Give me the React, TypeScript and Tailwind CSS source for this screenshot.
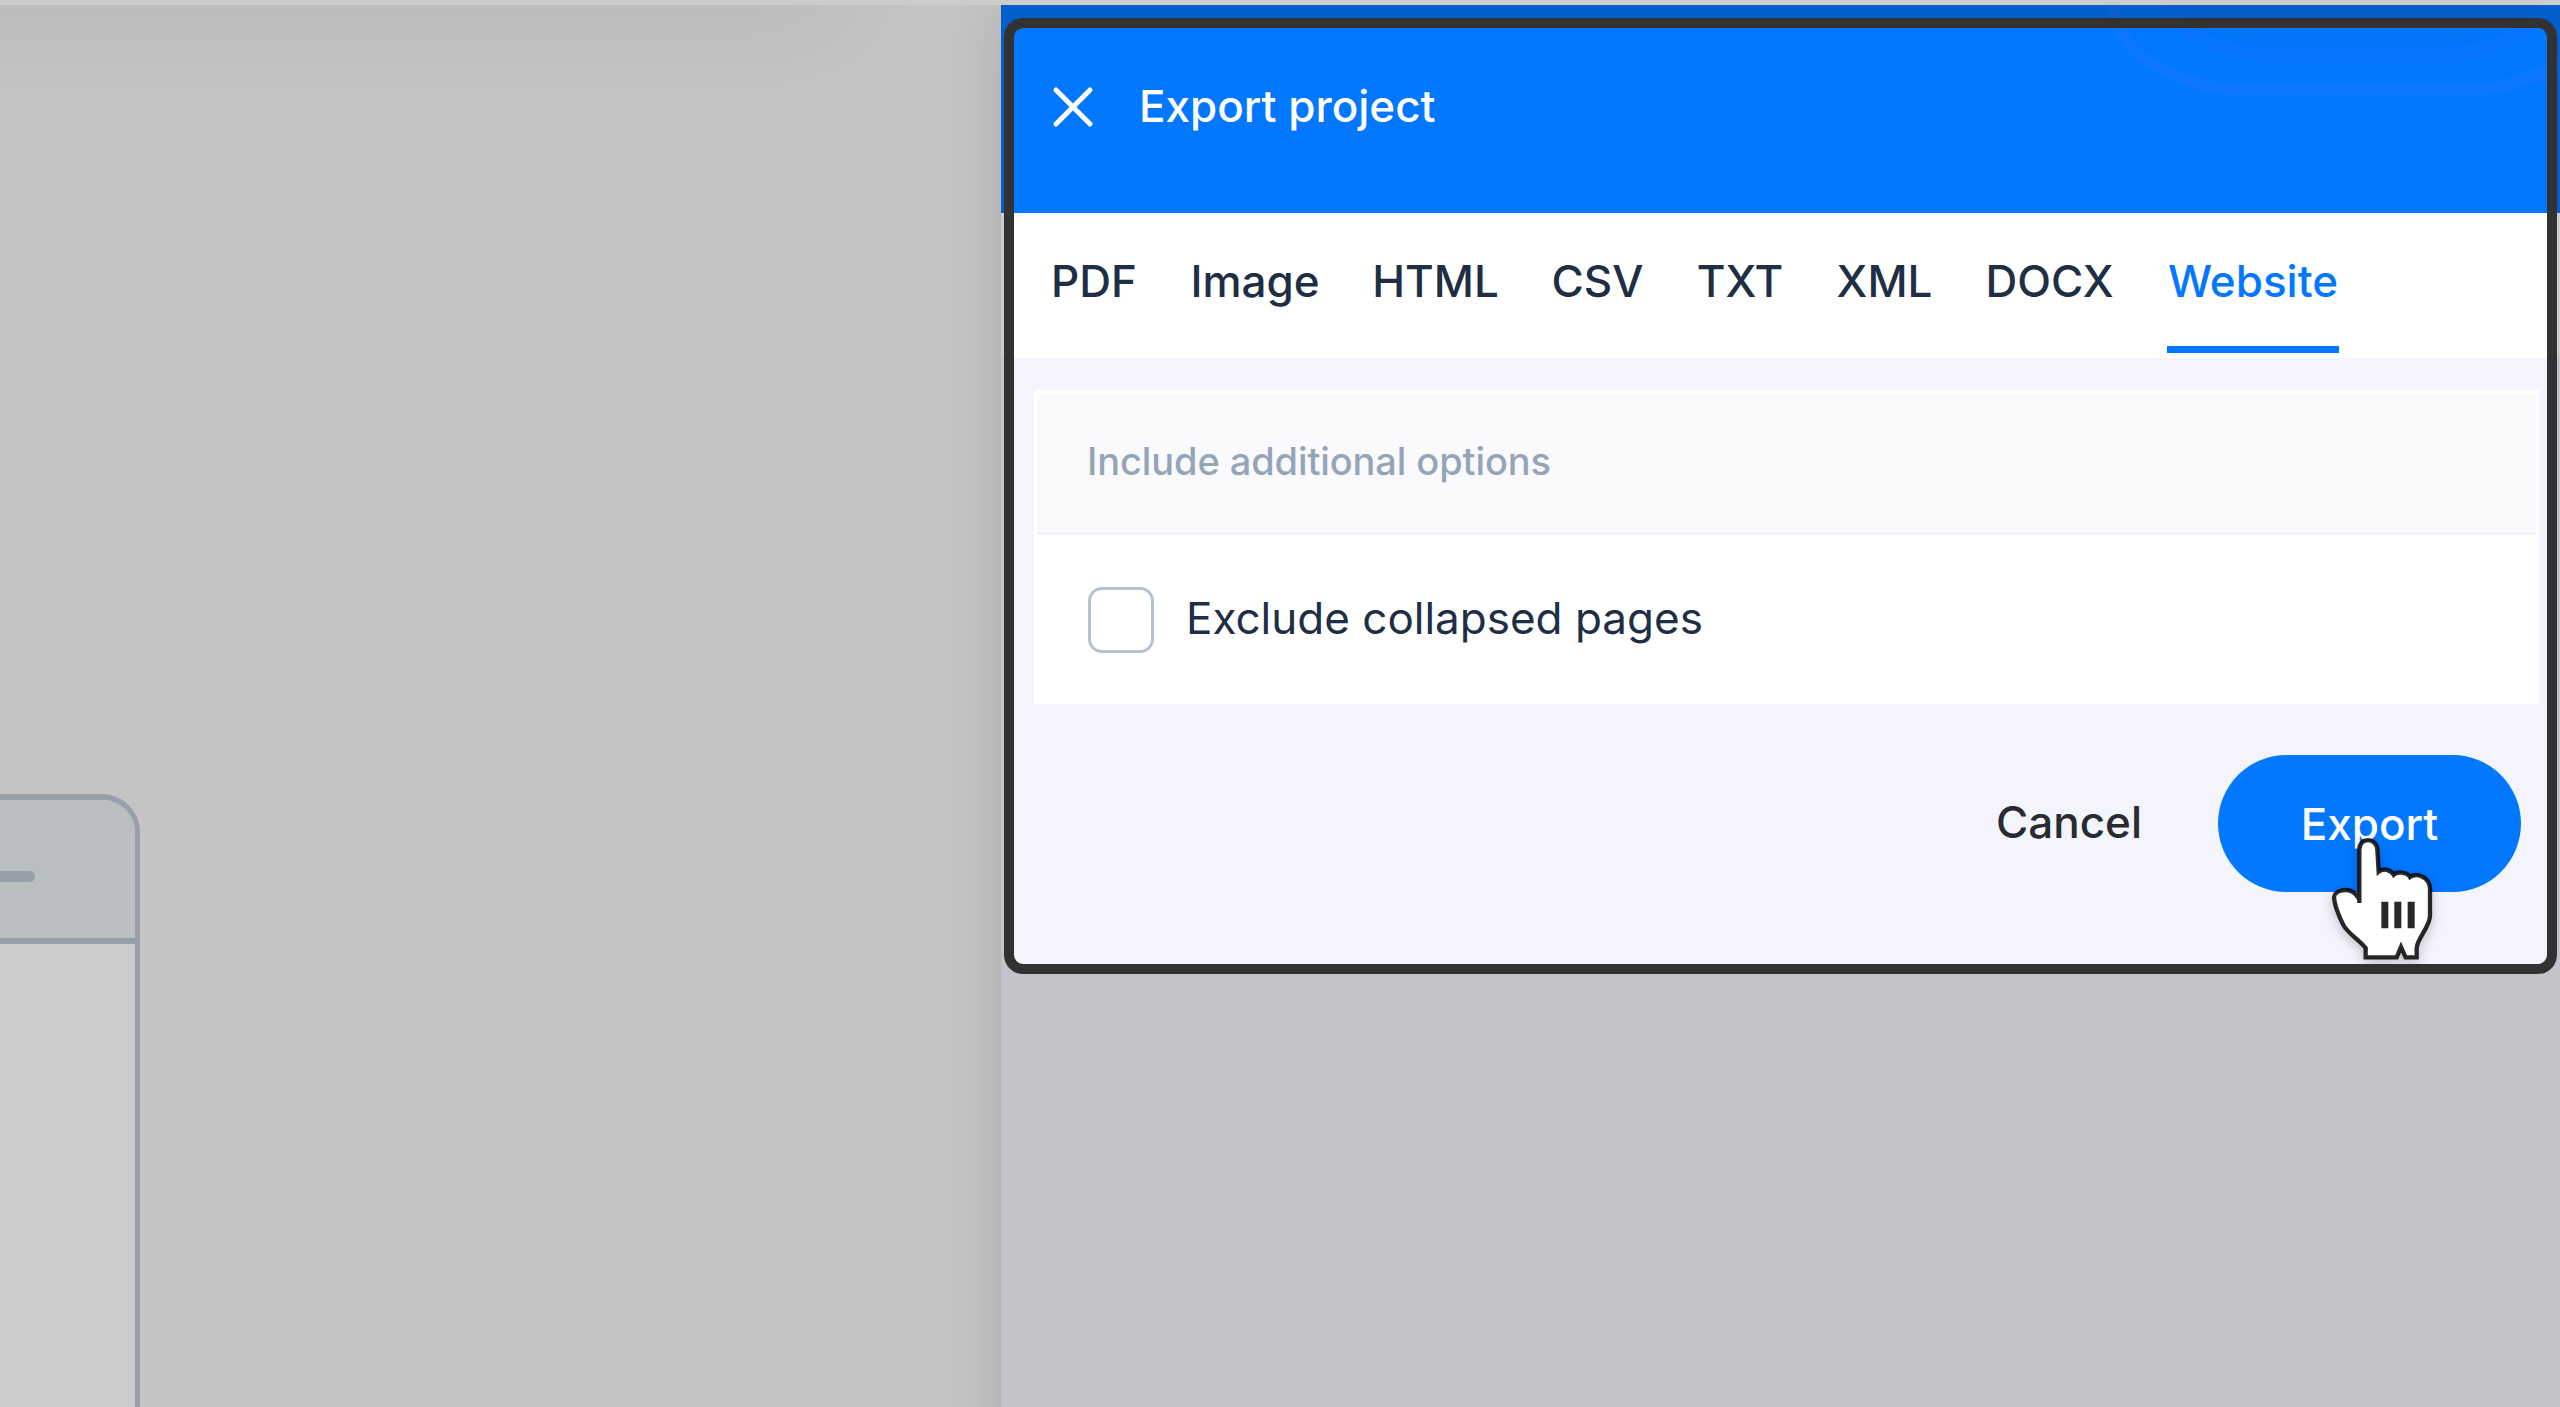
const tabs = [
  { label: "PDF", width: "w-[86px]" },
  { label: "Image", width: "w-[128px]" },
  { label: "HTML", width: "w-[125px]" },
  { label: "CSV", width: "w-[91px]" },
  { label: "TXT", width: "w-[86px]" },
  { label: "XML", width: "w-[95px]" },
  { label: "DOCX", width: "w-[127px]" },
  { label: "Website", width: "w-[172px]" },
];

function CloseIcon() {
  return (
    <svg className="h-[42px] w-[42px] shrink-0" viewBox="0 0 42 42" fill="none" stroke="white" strokeWidth="5" strokeLinecap="round">
      <path d="M4 4 38 38M38 4 4 38" />
    </svg>
  );
}

function HandCursor() {
  return (
    <svg
      className="absolute top-[65.5px] left-[82px] h-[150px] w-[160px] overflow-visible drop-shadow-[0_4px_6px_rgba(0,0,0,0.22)]"
      viewBox="0 0 480 450"
    >
      <path
        d="M178 246V86C178 48 230 48 232 86L236 152C250 140 272 146 281 161C292 150 322 154 330 168C350 154 390 168 390 204V284C390 318 350 352 350 382V409H317L303 378L290 409H197V381C176 354 148 342 130 312C116 284 104 252 102 230C102 208 144 198 165 218Q172 226 178 235Z"
        fill="white"
        stroke="black"
        strokeOpacity="0.84"
        strokeWidth="13"
      />
      <path d="M244 242h21v80h-21zM283 242h21v80h-21zM323 242h21v80h-21z" fill="#282828" />
    </svg>
  );
}

function Phone() {
  return (
    <div className="mt-[794px] flex h-[700px] w-[140px] flex-col overflow-hidden rounded-tr-[38px] border-t-[6px] border-r-[5px] border-[#bdc8d4] bg-white">
      <div className="flex h-[144px] shrink-0 items-start border-b-[6px] border-[#bdc8d4] bg-[#e8eff2] pt-[71px]">
        <div className="h-[11px] w-[35px] rounded-r-full bg-[#bdc8d4]" />
      </div>
    </div>
  );
}

function HeaderGlow() {
  return (
    <>
      <div className="absolute -top-[100px] left-[1105px] h-[192px] w-[498px] rounded-[150px/96px] border-[12px] border-[#0d78ff]" />
      <div className="absolute -top-[100px] left-[1149px] h-[160px] w-[410px] rounded-[150px/86px] border-[15px] border-[#0775ff] bg-[#0375fa]" />
    </>
  );
}

function ExportPanel() {
  return (
    <section className="relative flex w-[1559px] shrink-0 flex-col bg-[#f4f4fd] text-[#1e2f45] shadow-[0_0_64px_rgba(0,0,0,0.13)]">
      <header className="relative flex h-[208px] items-start overflow-hidden bg-[#0277ff] pt-[81px] pl-[51px] text-white">
        <HeaderGlow />
        <CloseIcon />
        <h1 className="ml-[45px] text-[44px] leading-[41px] font-medium whitespace-nowrap">Export project</h1>
      </header>
      <nav className="flex h-[145px] items-start gap-[54px] bg-white pl-[50px]">
        {tabs.map((tab) => (
          <div
            key={tab.label}
            className={
              "flex h-[140px] justify-center pt-[41px] text-[44px] leading-[54px] font-medium whitespace-nowrap " +
              tab.width +
              (tab.label === "Website" ? " border-b-[7px] border-[#0277ff] text-[#0277ff]" : "")
            }
          >
            {tab.label}
          </div>
        ))}
      </nav>
      <div className="mt-[32px] ml-[33px] flex h-[314px] w-[1505px] flex-col border-x-[3px] border-t-[4px] border-white bg-white">
        <div className="flex h-[141px] items-center border-b-[3px] border-[#eff1f4] bg-[#fafafc] pb-[3px] pl-[50px] text-[38px] font-medium tracking-[-0.1px] text-[#94a5b8]">
          Include additional options
        </div>
        <label className="flex h-[169px] items-center gap-[32px] pl-[51px] text-[44px] whitespace-nowrap">
          <span className="h-[66px] w-[66px] rounded-[14px] border-[3px] border-[#b4c3d2] bg-white" />
          <span className="pb-[3px]">Exclude collapsed pages</span>
        </label>
      </div>
      <div className="mt-[51px] flex items-center justify-end gap-[76px] pr-[39px] text-[44px] font-medium whitespace-nowrap">
        <button className="pb-[3px] text-[#282b30]">Cancel</button>
        <div className="relative">
          <button className="h-[137px] w-[303px] rounded-full bg-[#0277ff] pt-[1px] text-white">Export</button>
          <HandCursor />
        </div>
      </div>
    </section>
  );
}

export default function App() {
  return (
    <div className="relative flex h-[1407px] w-[2560px] flex-col overflow-hidden bg-[#f6f6f6] font-['Inter',sans-serif]">
      <div className="relative z-10 h-[5px] shrink-0 bg-white" />
      <main className="flex h-[1500px] shrink-0">
        <div className="relative flex-1 overflow-hidden">
          <div className="absolute -top-[90px] -left-[200px] h-[80px] w-[1060px] rounded-full shadow-[0_24px_120px_rgba(0,0,40,0.09)]" />
          <div className="-mt-[5px]">
            <Phone />
          </div>
        </div>
        <ExportPanel />
      </main>
      <div className="pointer-events-none absolute top-[18px] left-[1004px] z-20 h-[956px] w-[1552.5px] rounded-[19px] border-[10.5px] border-[#323232] shadow-[0_0_0_3000px_rgba(0,0,0,0.2)]" />
    </div>
  );
}
